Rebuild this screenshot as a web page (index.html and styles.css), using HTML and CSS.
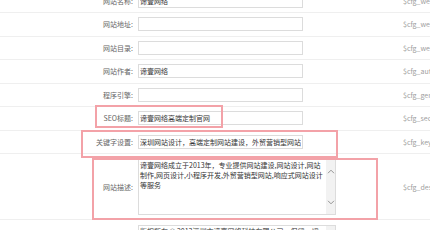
FILE: index.html
```html
<!DOCTYPE html>
<html lang="zh-CN">
<head>
<meta charset="utf-8">
<title>系统基本参数</title>
<link rel="stylesheet" href="styles.css">
</head>
<body>
<div class="page">
  <div class="rows">
    <div class="row"><div class="label">网站名称:</div><div class="field"><input class="input" type="text" value="谛壹网络"></div><div class="var">$cfg_webname</div></div>
    <div class="row"><div class="label">网站地址:</div><div class="field"><input class="input" type="text" value=""></div><div class="var">$cfg_weburl</div></div>
    <div class="row"><div class="label">网站目录:</div><div class="field"><input class="input" type="text" value=""></div><div class="var">$cfg_webpath</div></div>
    <div class="row"><div class="label">网站作者:</div><div class="field"><input class="input" type="text" value="谛壹网络"></div><div class="var">$cfg_author</div></div>
    <div class="row"><div class="label">程序引擎:</div><div class="field"><input class="input" type="text" value=""></div><div class="var">$cfg_generator</div></div>
    <div class="row"><div class="label">SEO标题:</div><div class="field"><input class="input" type="text" value="谛壹网络高端定制官网"></div><div class="var">$cfg_seotitle</div></div>
    <div class="row"><div class="label">关键字设置:</div><div class="field"><input class="input" type="text" value="深圳网站设计，高端定制网站建设，外贸营销型网站"></div><div class="var">$cfg_keywords</div></div>
    <div class="row row-tall"><div class="label">网站描述:</div><div class="field"><div class="textarea"><div class="ta-text">谛壹网络成立于2013年，专业提供网站建设,网站设计,网站制作,网页设计,小程序开发,外贸营销型网站,响应式网站设计等服务</div><div class="scrollbar"><svg class="chev" viewBox="0 0 8 5" width="8" height="5"><polyline points="1,4.2 4,1.2 7,4.2"/></svg><svg class="chev" viewBox="0 0 8 5" width="8" height="5"><polyline points="1,0.8 4,3.8 7,0.8"/></svg></div></div></div><div class="var">$cfg_description</div></div>
    <div class="row row-last"><div class="label">版权信息:</div><div class="field"><div class="textarea"><div class="ta-text">版权所有 © 2013深圳市谛壹网络科技有限公司，保留一切权利</div><div class="scrollbar"></div></div></div><div class="var">$cfg_powerby</div></div>
  </div>
  <div class="mark mark-seo"></div>
  <div class="mark mark-kw"></div>
  <div class="mark mark-desc"></div>
</div>
</body>
</html>
```
FILE: styles.css
```css
body {
  margin: 0;
  background: #fff;
  font-family: "Noto Sans CJK SC", "Noto Sans", sans-serif;
  font-size: 7px;
  color: #666;
}

.page {
  position: relative;
  width: 430px;
  height: 230px;
  overflow: hidden;
}

.rows {
  margin-top: -10.3px;
}

.row {
  display: flex;
  align-items: center;
  height: 23.5px;
  border-bottom: 1px solid #efefef;
  box-sizing: border-box;
}

.row-tall {
  height: 66px;
}

.row-last {
  height: 60px;
  align-items: flex-start;
  padding-top: 4.5px;
  border-bottom: none;
}

.label {
  flex: none;
  width: 133px;
  text-align: right;
  white-space: nowrap;
  line-height: 10px;
}

.row-last .label {
  visibility: hidden;
}

.field {
  flex: none;
  width: 265px;
  margin-left: 5px;
  display: flex;
  align-items: center;
}

.var {
  color: #a0a0a0;
  white-space: nowrap;
  line-height: 10px;
}

.row-last .var {
  visibility: hidden;
}

.input {
  width: 165px;
  height: 14px;
  margin: 0;
  padding: 0 1px;
  border: 1px solid #dcdcdc;
  box-sizing: border-box;
  font-family: "Noto Sans CJK SC", "Noto Sans", sans-serif;
  font-size: 7px;
  color: #333;
  background: #fff;
  outline: none;
}

.textarea {
  display: flex;
  width: 198px;
  height: 56px;
  border: 1px solid #dcdcdc;
  box-sizing: border-box;
  background: #fff;
}

.ta-text {
  flex: 1;
  padding: 0.5px 1px;
  line-height: 10px;
  color: #333;
  overflow: hidden;
}

.scrollbar {
  flex: none;
  width: 9px;
  background: #f2f2f2;
  display: flex;
  flex-direction: column;
  justify-content: space-between;
  align-items: center;
  padding: 9px 0;
  box-sizing: border-box;
}

.chev polyline {
  fill: none;
  stroke: #8a8a8a;
  stroke-width: 0.9;
}

.mark {
  position: absolute;
  border: 2px solid #f3a2a8;
  box-sizing: border-box;
}

.mark-seo {
  left: 95px;
  top: 105px;
  width: 128px;
  height: 23px;
}

.mark-kw {
  left: 81px;
  top: 130px;
  width: 257px;
  height: 28px;
}

.mark-desc {
  left: 92px;
  top: 158px;
  width: 286px;
  height: 62px;
}
```
